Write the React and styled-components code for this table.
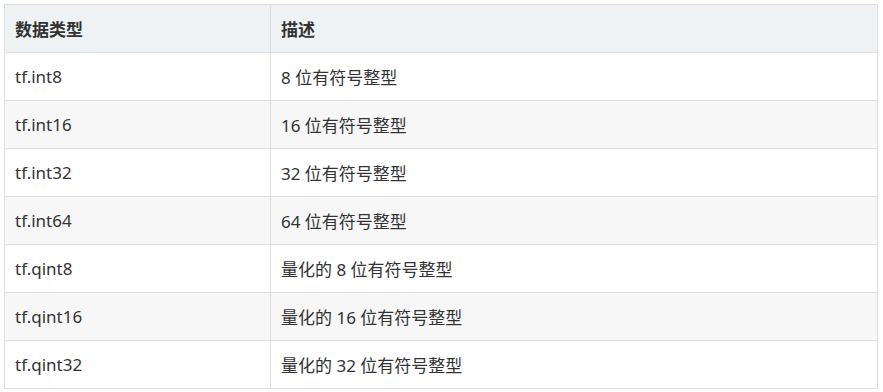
import React from "react";
import styled, { createGlobalStyle } from "styled-components";

const Global = createGlobalStyle`
  html, body { margin: 0; padding: 0; background: #fff; }
  body { font-family: "Noto Sans", "Noto Sans CJK SC", sans-serif; }
`;

const Wrap = styled.div`
  padding: 4px;
`;

const Table = styled.table`
  border-collapse: collapse;
  width: 874px;
  table-layout: fixed;
  font-size: 17px;
  color: #333;
`;

const Head = styled.th`
  background: #eff2f5;
  font-weight: 700;
  text-align: left;
  height: 48px;
  padding: 0 10px 1px;
  border: 1px solid #ddd;
  width: ${(p) => p.$w || "auto"};
  box-sizing: border-box;
`;

const Row = styled.tr`
  background: ${(p) => (p.$alt ? "#f7f7f7" : "#fff")};
`;

const Cell = styled.td`
  height: 48px;
  padding: 0 10px 1px;
  border: 1px solid #ddd;
  box-sizing: border-box;
`;

const rows = [
  ["tf.int8", "8 位有符号整型"],
  ["tf.int16", "16 位有符号整型"],
  ["tf.int32", "32 位有符号整型"],
  ["tf.int64", "64 位有符号整型"],
  ["tf.qint8", "量化的 8 位有符号整型"],
  ["tf.qint16", "量化的 16 位有符号整型"],
  ["tf.qint32", "量化的 32 位有符号整型"],
];

export default function App() {
  return (
    <Wrap>
      <Global />
      <Table>
        <thead>
          <tr>
            <Head $w="266px">数据类型</Head>
            <Head>描述</Head>
          </tr>
        </thead>
        <tbody>
          {rows.map(([a, b], i) => (
            <Row key={a} $alt={i % 2 === 1}>
              <Cell>{a}</Cell>
              <Cell>{b}</Cell>
            </Row>
          ))}
        </tbody>
      </Table>
    </Wrap>
  );
}
